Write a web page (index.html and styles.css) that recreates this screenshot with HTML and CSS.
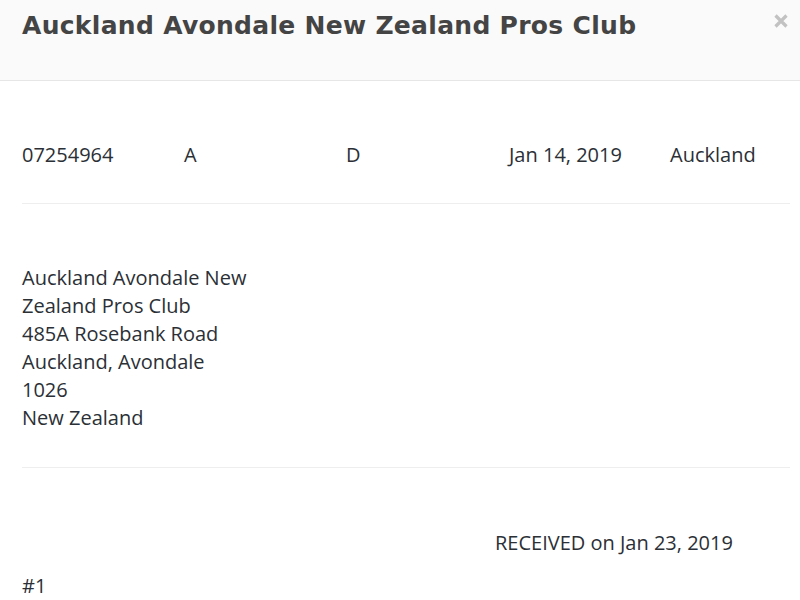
FILE: index.html
```html
<!DOCTYPE html>
<html>
<head>
<meta charset="utf-8">
<link rel="stylesheet" href="styles.css">
</head>
<body>
<div class="modal">
  <header class="modal-header">
    <h1 class="title">Auckland Avondale New Zealand Pros Club</h1>
    <span class="close" aria-label="Close"><svg class="close-icon" width="16" height="16" viewBox="0 0 16 16"><path d="M2.5 2.5 L13.5 13.5 M13.5 2.5 L2.5 13.5" stroke="#c2c2c2" stroke-width="3.2" stroke-linecap="butt" fill="none"/></svg></span>
  </header>
  <div class="content">
    <section class="section row">
      <div class="cell">07254964</div>
      <div class="cell">A</div>
      <div class="cell">D</div>
      <div class="cell">Jan 14, 2019</div>
      <div class="cell">Auckland</div>
    </section>
    <section class="section address">
      <div class="addr-line">Auckland Avondale New</div>
      <div class="addr-line">Zealand Pros Club</div>
      <div class="addr-line">485A Rosebank Road</div>
      <div class="addr-line">Auckland, Avondale</div>
      <div class="addr-line">1026</div>
      <div class="addr-line">New Zealand</div>
    </section>
    <section class="section status">
      <div class="received">RECEIVED on Jan 23, 2019</div>
      <div class="number">#1</div>
    </section>
  </div>
</div>
</body>
</html>
```

FILE: styles.css
```css
html, body {
  margin: 0;
  padding: 0;
  background: #ffffff;
}
body {
  font-family: "Open Sans", "Liberation Sans", sans-serif;
  color: #2b3036;
  font-size: 20px;
  line-height: 28px;
}
.modal-header {
  height: 80px;
  background: #fafafa;
  border-bottom: 1px solid #e6e6e6;
  display: flex;
  align-items: flex-start;
  justify-content: space-between;
  padding: 0 11px 0 22px;
}
.title {
  margin: 0;
  padding-top: 9px;
  font-family: "DejaVu Sans", "Liberation Sans", sans-serif;
  font-weight: 700;
  font-size: 25px;
  line-height: 34px;
  letter-spacing: 0.3px;
  color: #444444;
}
.close {
  display: block;
  padding-top: 13px;
  line-height: 0;
}
.close-icon {
  display: block;
}
.content {
  padding: 0 10px 0 22px;
}
.section {
  border-bottom: 1px solid #eeeeee;
}
.row {
  display: grid;
  grid-template-columns: 162px 162px 163px 161px 1fr;
  padding: 60px 0 34px;
}
.address {
  padding: 60px 0 35px;
}
.status {
  border-bottom: none;
  padding: 61px 0 0;
}
.received {
  padding-left: 473px;
}
.number {
  margin-top: 15px;
}
```
